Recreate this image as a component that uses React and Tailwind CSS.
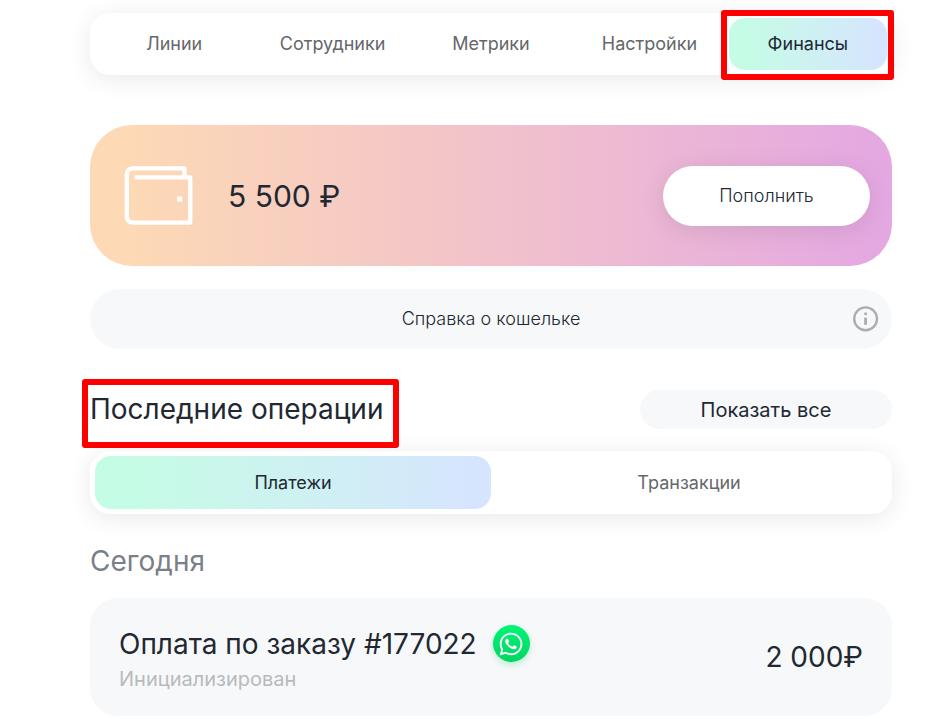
import { useState } from "react";
import { FaWhatsapp } from "react-icons/fa";

const sections = ["Линии", "Сотрудники", "Метрики", "Настройки", "Финансы"];
const operationTabs = ["Платежи", "Транзакции"];

const payments = [
  { id: 177022, title: "Оплата по заказу #177022", status: "Инициализирован", amount: "2 000₽" },
];

function WalletIcon() {
  return (
    <svg width="70" height="60" viewBox="0 0 70 60" fill="none" stroke="#fff" strokeWidth="4.4" strokeLinejoin="round" aria-hidden="true">
      <path d="M10.5 11.4H66.2V56.6H9.5Q2.8 56.6 2.8 49.9V9.1Q2.8 2.4 9.5 2.4H60.5V11" />
      <rect x="53.2" y="30.5" width="5" height="5" fill="#fff" stroke="none" />
    </svg>
  );
}

function InfoIcon() {
  return (
    <svg width="26" height="26" viewBox="0 0 26 26" fill="none" aria-hidden="true">
      <circle cx="12.6" cy="12.8" r="11.4" stroke="#adadad" strokeWidth="2.4" />
      <circle cx="12.6" cy="7.8" r="1.5" fill="#adadad" />
      <rect x="11.2" y="11.6" width="2.8" height="7.2" fill="#adadad" />
    </svg>
  );
}

function Tab({ label, active, onClick, children }) {
  return (
    <button
      type="button"
      onClick={onClick}
      className={
        active
          ? "relative flex-1 rounded-2xl bg-linear-to-r from-[#c5fce5] from-10% to-[#d6e5fe] to-95% text-lg text-[#212832]"
          : "relative flex-1 rounded-2xl text-lg text-[#66676b]"
      }
    >
      {label}
      {children}
    </button>
  );
}

export default function App() {
  const [section, setSection] = useState("Финансы");
  const [operation, setOperation] = useState("Платежи");

  return (
    <main className="bg-white pt-[13px] pr-[59px] pl-[90px] font-['Inter',sans-serif] text-[#212832]">
      <nav className="flex h-[62px] rounded-[20px] bg-white p-[5px] shadow-[0_4px_24px_rgba(0,0,0,0.09)]">
        {sections.map((name) => (
          <Tab key={name} label={name} active={section === name} onClick={() => setSection(name)}>
            {name === "Финансы" && (
              <span className="pointer-events-none absolute -top-2 -right-[7px] -bottom-[10px] -left-2 rounded-[3px] border-6 border-[#ff0000]" />
            )}
          </Tab>
        ))}
      </nav>

      <section className="mt-[50px] flex h-[141px] items-center rounded-[42px] bg-linear-to-r from-[#fdd9b5] from-5% via-[#f4c7c6] via-40% to-[#e4a7e2] pr-[22px] pl-[34px]">
        <WalletIcon />
        <p className="ml-[34px] text-[30px] leading-10">5 500 ₽</p>
        <button
          type="button"
          className="ml-auto h-[60px] w-[207px] rounded-full bg-white text-lg font-light shadow-[0_4px_24px_rgba(0,0,0,0.1)]"
        >
          Пополнить
        </button>
      </section>

      <button
        type="button"
        className="mt-[23px] grid h-[60px] w-full grid-cols-[26px_1fr_26px] items-center rounded-full bg-[#f7f8fa] px-[13px] text-lg font-light"
      >
        <span className="col-start-2">Справка о кошельке</span>
        <InfoIcon />
      </button>

      <div className="mt-[41px] flex h-[39px] items-center justify-between">
        <h1 className="relative text-[28px] leading-[39px]">
          Последние операции
          <span className="pointer-events-none absolute -top-[11px] -right-4 -bottom-[19px] -left-2 rounded-[3px] border-6 border-[#ff0000]" />
        </h1>
        <button type="button" className="h-[39px] w-[252px] rounded-full bg-[#f7f8fa] text-xl">
          Показать все
        </button>
      </div>

      <div className="mt-[22px] flex h-[63px] rounded-[20px] bg-white p-[5px] shadow-[0_4px_24px_rgba(0,0,0,0.09)]">
        {operationTabs.map((name) => (
          <Tab key={name} label={name} active={operation === name} onClick={() => setOperation(name)} />
        ))}
      </div>

      <h2 className="mt-[27px] text-[28px] leading-10 text-[#7b7f87]">Сегодня</h2>

      <ul className="mt-[17px] space-y-4">
        {payments.map((p) => (
          <li key={p.id} className="flex h-[118px] items-center justify-between rounded-[28px] bg-[#f7f8fa] px-[29px]">
            <div className="pt-[3px]">
              <div className="flex items-center gap-4">
                <h3 className="text-[28px] leading-10">{p.title}</h3>
                <span className="flex size-[37px] items-center justify-center rounded-full bg-linear-to-b from-[#00f676] to-[#00d561] text-white shadow-[0_3px_6px_rgba(0,214,98,0.25)]">
                  <FaWhatsapp size={26} aria-label="WhatsApp" />
                </span>
              </div>
              <p className="text-xl leading-[30px] text-[#b9babb]">{p.status}</p>
            </div>
            <p className="text-[28px] leading-10">{p.amount}</p>
          </li>
        ))}
      </ul>
    </main>
  );
}
